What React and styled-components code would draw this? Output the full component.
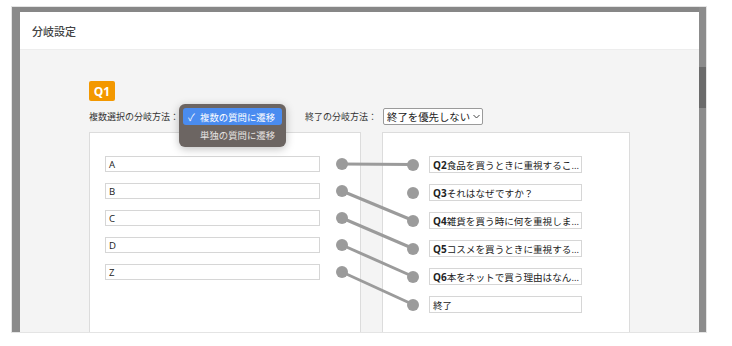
import React from 'react'
import styled, { createGlobalStyle } from 'styled-components'

const GlobalStyle = createGlobalStyle`
  body {
    margin: 0;
    background: #fff;
    font-family: "Noto Sans CJK JP", "Noto Sans", sans-serif;
  }
`

const Frame = styled.div`
  margin: 6px 0 0 11px;
  width: 694px;
  height: 325px;
  border: 1px solid #e4e4e4;
  background: #878787;
  display: flex;
  align-items: flex-start;
  overflow: hidden;
`

const Gutter = styled.div`
  width: 8px;
  height: 100%;
  flex: none;
  background: #8a8a8a;
`

const ScrollTrack = styled.div`
  width: 7px;
  height: 100%;
  box-sizing: border-box;
  flex: none;
  background: #8c8c8c;
  padding-top: 60px;
`

const ScrollThumb = styled.div`
  height: 41px;
  background: #6b6b6b;
`

const Modal = styled.div`
  margin-top: 5px;
  width: 679px;
  height: 320px;
  flex: none;
  overflow: hidden;
  background: #f4f4f4;
`

const Header = styled.header`
  height: 38px;
  background: #fff;
  border-bottom: 1px solid #ededed;
  box-sizing: border-box;
  display: flex;
  align-items: center;
  padding-left: 12px;
  font-size: 11px;
  font-weight: 500;
  color: #444;
`

const Body = styled.div`
  padding: 31px 0 0 69px;
`

const Badge = styled.div`
  width: 26px;
  height: 20px;
  border-radius: 2px;
  background: #f39800;
  color: #fff;
  font-family: "Open Sans", sans-serif;
  font-weight: 700;
  font-size: 12px;
  display: flex;
  align-items: center;
  justify-content: center;
`

const MethodRow = styled.div`
  margin-top: 7px;
  height: 17px;
  display: flex;
  align-items: center;
  font-size: 9px;
  color: #333;
`

const SelectSlot = styled.div`
  position: relative;
  z-index: 2;
  flex: none;
  width: 107px;
  height: 17px;
  margin-right: 19px;
`

const Popup = styled.div`
  position: absolute;
  left: 0;
  top: -4px;
  width: 107px;
  box-sizing: border-box;
  padding: 4px;
  border-radius: 6px;
  background: #6c6562;
  box-shadow: 0 2px 8px rgba(0, 0, 0, 0.25);
  display: flex;
  flex-direction: column;
  gap: 1px;
`

const PopupItem = styled.div`
  height: 17px;
  flex: none;
  border-radius: 3px;
  background: ${p => (p.$active ? '#4a8cf0' : 'transparent')};
  color: ${p => (p.$active ? '#fff' : '#e6e3e1')};
  font-size: 9.4px;
  display: flex;
  align-items: center;
  padding-left: 3px;
  gap: 3px;
`

const Check = styled.span`
  width: 11px;
  font-size: 10px;
  text-align: center;
`

const Select = styled.div`
  margin-left: 6px;
  width: 100px;
  height: 17px;
  box-sizing: border-box;
  border: 1px solid #9a9a9a;
  border-radius: 2px;
  background: #fff;
  display: flex;
  align-items: center;
  padding-left: 3px;
  font-size: 10.4px;
  color: #222;
  gap: 3px;
`

const Panels = styled.div`
  position: relative;
  margin-top: 7px;
  display: flex;
  gap: 21px;
`

const Panel = styled.div`
  width: ${p => p.$width}px;
  height: 230px;
  flex: none;
  box-sizing: border-box;
  border: 1px solid #dcdcdc;
  background: #fff;
  padding: 23px 0 0 ${p => p.$pad}px;
  display: flex;
  flex-direction: column;
  gap: ${p => p.$gap}px;
`

const Row = styled.div`
  display: flex;
  align-items: center;
  flex: none;
  gap: ${p => p.$gap}px;
`

const Field = styled.div`
  width: ${p => p.$width}px;
  height: ${p => p.$height}px;
  flex: none;
  box-sizing: border-box;
  border: 1px solid #d6d6d6;
  background: #fff;
  padding-left: 3px;
  display: flex;
  align-items: center;
  font-family: "Open Sans", "Noto Sans CJK JP", sans-serif;
  font-size: 9.6px;
  color: #222;
  white-space: nowrap;
  overflow: hidden;
`

const QNo = styled.b`
  font-weight: 700;
  font-size: 10px;
`

const Dot = styled.span`
  width: 12px;
  height: 12px;
  border-radius: 50%;
  background: #9b9b9b;
  flex: none;
`

const Wires = styled.svg`
  position: absolute;
  left: 0;
  top: 0;
  pointer-events: none;
`

const choices = ['A', 'B', 'C', 'D', 'Z']

const targets = [
  { no: 'Q2', text: '食品を買うときに重視するこ...' },
  { no: 'Q3', text: 'それはなぜですか？' },
  { no: 'Q4', text: '雑貨を買う時に何を重視しま...' },
  { no: 'Q5', text: 'コスメを買うときに重視する...' },
  { no: 'Q6', text: '本をネットで買う理由はなん...' },
  { no: '', text: '終了' },
]

// choice index -> target index
const links = [
  [0, 0],
  [1, 2],
  [2, 3],
  [3, 4],
  [4, 5],
]

const App = () => {
  return (
    <>
      <GlobalStyle />
      <Frame>
        <Gutter />
        <Modal>
          <Header>分岐設定</Header>
          <Body>
            <Badge>Q1</Badge>
            <MethodRow>
              <span>複数選択の分岐方法：</span>
              <SelectSlot>
                <Popup>
                  <PopupItem $active>
                    <Check>✓</Check>複数の質問に遷移
                  </PopupItem>
                  <PopupItem>
                    <Check />単独の質問に遷移
                  </PopupItem>
                </Popup>
              </SelectSlot>
              <span>終了の分岐方法：</span>
              <Select>
                終了を優先しない
                <svg width="7" height="5" viewBox="0 0 7 5">
                  <path d="M0.5 1 L3.5 4 L6.5 1" fill="none" stroke="#444" strokeWidth="1" />
                </svg>
              </Select>
            </MethodRow>
            <Panels>
              <Panel $width={272} $pad={15} $gap={11}>
                {choices.map(c => (
                  <Row key={c} $gap={16}>
                    <Field $width={215} $height={16}>{c}</Field>
                    <Dot />
                  </Row>
                ))}
              </Panel>
              <Panel $width={248} $pad={24} $gap={11}>
                {targets.map(t => (
                  <Row key={t.text} $gap={10}>
                    <Dot />
                    <Field $width={153} $height={17}>
                      {t.no && <QNo>{t.no}</QNo>}
                      {t.text}
                    </Field>
                  </Row>
                ))}
              </Panel>
              <Wires width="541" height="230">
                {links.map(([from, to]) => (
                  <line
                    key={from}
                    x1={253}
                    y1={32 + from * 27}
                    x2={324}
                    y2={32.5 + to * 28}
                    stroke="#9b9b9b"
                    strokeWidth="3"
                  />
                ))}
              </Wires>
            </Panels>
          </Body>
        </Modal>
        <ScrollTrack>
          <ScrollThumb />
        </ScrollTrack>
      </Frame>
    </>
  )
}

export default App
